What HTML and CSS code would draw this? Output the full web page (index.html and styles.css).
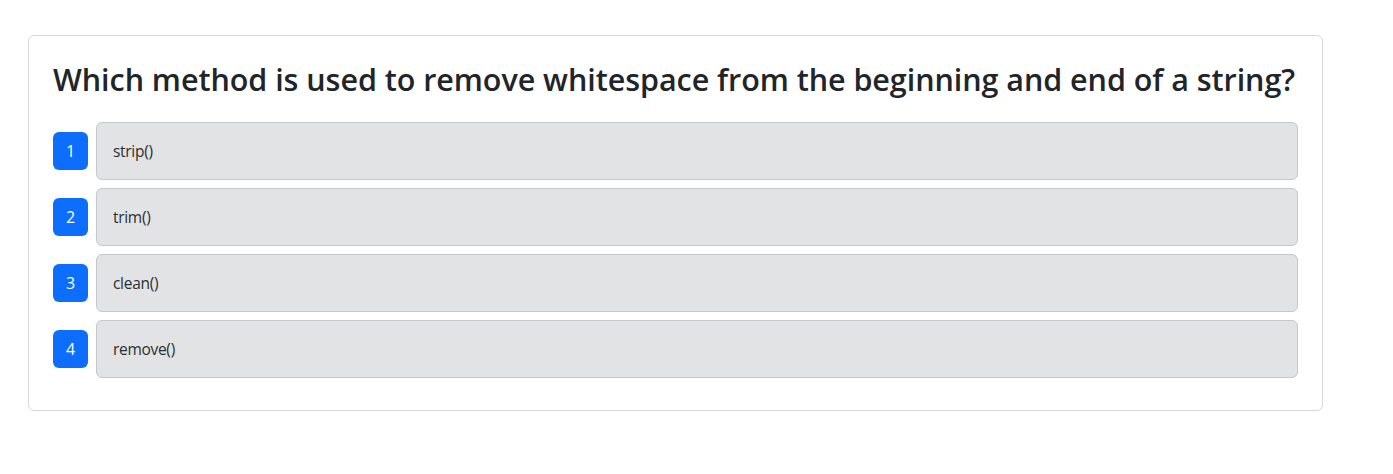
FILE: index.html
```html
<!DOCTYPE html>
<html lang="en">
<head>
<meta charset="utf-8">
<title>Quiz</title>
<link rel="stylesheet" href="styles.css">
</head>
<body>
<div class="page">
  <div class="card">
    <h2 class="question">Which method is used to remove whitespace from the beginning and end of a string?</h2>
    <div class="options">
      <div class="option"><span class="badge">1</span><div class="answer">strip()</div></div>
      <div class="option"><span class="badge">2</span><div class="answer">trim()</div></div>
      <div class="option"><span class="badge">3</span><div class="answer">clean()</div></div>
      <div class="option"><span class="badge">4</span><div class="answer">remove()</div></div>
    </div>
  </div>
</div>
</body>
</html>
```
FILE: styles.css
```css
* { box-sizing: border-box; }
body {
  margin: 0;
  background: #fff;
  font-family: "Open Sans", "Noto Sans", "Liberation Sans", sans-serif;
  color: #212529;
}
.page {
  padding: 35px 70px 0 28px;
}
.card {
  border: 1px solid #d5d8db;
  border-radius: 6px;
  padding: 24px 24px 32px 24px;
}
.question {
  margin: 0 0 24px 0;
  font-size: 30.5px;
  font-weight: 600;
  line-height: 38px;
  letter-spacing: -0.05px;
  white-space: nowrap;
  color: #212529;
}
.options {
  display: flex;
  flex-direction: column;
  gap: 8px;
}
.option {
  display: flex;
  align-items: center;
  gap: 8px;
}
.badge {
  flex: none;
  width: 35px;
  height: 38px;
  display: flex;
  align-items: center;
  justify-content: center;
  background: #0d6efd;
  color: #fff;
  border-radius: 6px;
  font-size: 16px;
}
.answer {
  flex: 1;
  height: 58px;
  display: flex;
  align-items: center;
  padding: 0 16px;
  background: #e2e3e5;
  border: 1px solid #c4c8cb;
  border-radius: 6px;
  font-size: 15.5px;
  color: #2b2f32;
  letter-spacing: -0.3px;
}
```
